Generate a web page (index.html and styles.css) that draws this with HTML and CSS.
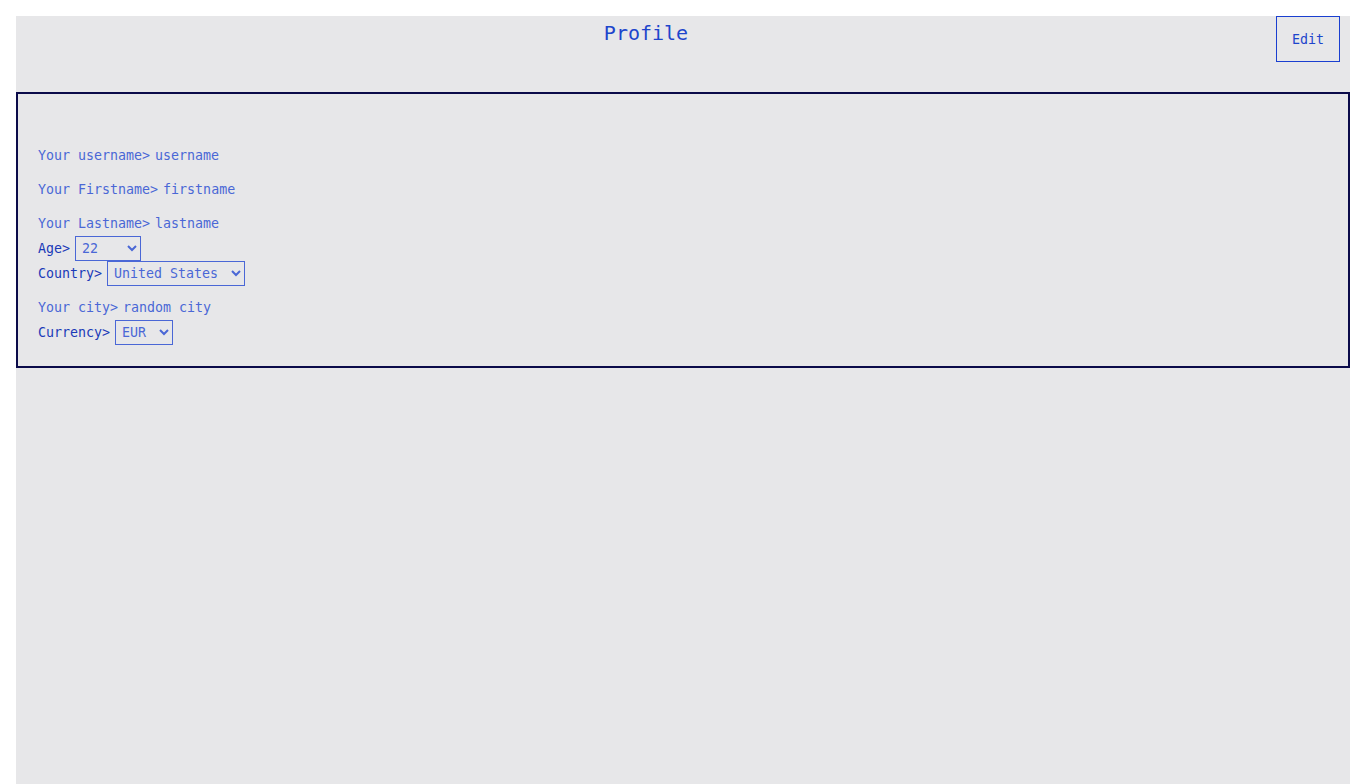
FILE: index.html
```html
<!DOCTYPE html>
<html>
<head>
<meta charset="utf-8">
<title>Profile</title>
<link rel="stylesheet" href="styles.css">
</head>
<body>
<div class="page">
  <header class="header">
    <h1 class="title">Profile</h1>
    <button class="edit-btn">Edit</button>
  </header>
  <section class="profile-box">
    <div class="row text-row"><span class="label">Your username&gt;</span><span class="value">username</span></div>
    <div class="row text-row"><span class="label">Your Firstname&gt;</span><span class="value">firstname</span></div>
    <div class="row text-row"><span class="label">Your Lastname&gt;</span><span class="value">lastname</span></div>
    <div class="row"><span class="label dark">Age&gt;</span><select class="sel sel-age"><option>22</option></select></div>
    <div class="row"><span class="label dark">Country&gt;</span><select class="sel sel-country"><option>United States</option></select></div>
    <div class="row text-row"><span class="label">Your city&gt;</span><span class="value">random city</span></div>
    <div class="row"><span class="label dark">Currency&gt;</span><select class="sel sel-cur"><option>EUR</option></select></div>
  </section>
</div>
</body>
</html>
```

FILE: styles.css
```css
html, body {
  margin: 0;
  padding: 0;
  background: #ffffff;
}
body {
  padding: 16px 0 0 16px;
  font-family: "DejaVu Sans Mono", "Liberation Mono", monospace;
  font-size: 13.3px;
  overflow: hidden;
}
.page {
  background: #e7e7e9;
  min-height: calc(100vh - 16px);
}
.header {
  display: flex;
  align-items: flex-start;
  height: 76px;
  padding-right: 10px;
}
.title {
  flex: 1;
  margin: 0;
  padding-top: 5px;
  text-align: center;
  font-size: 20px;
  font-weight: normal;
  color: #1d45cc;
  line-height: 24px;
}
.edit-btn {
  width: 64px;
  height: 46px;
  border: 1px solid #1a3fd0;
  background: transparent;
  color: #1d45cc;
  font-family: inherit;
  font-size: 13.3px;
  padding: 0;
}
.profile-box {
  border: 2px solid #0b0b4a;
  padding: 40px 20px 21px 20px;
}
.row {
  display: flex;
  align-items: center;
  height: 25px;
  color: #4a67d6;
}
.text-row {
  margin-top: 9px;
}
.label {
  margin-right: 5px;
}
.label.dark {
  color: #1a3ab8;
}
.sel {
  height: 25px;
  border: 1px solid #4a67d6;
  border-radius: 0;
  background-color: transparent;
  color: #4a67d6;
  font-family: inherit;
  font-size: 13.3px;
  padding: 0 2px 0 2px;
  margin: 0;
}
.sel-age { width: 66px; }
.sel-country { width: 138px; }
.sel-cur { width: 58px; }
```
